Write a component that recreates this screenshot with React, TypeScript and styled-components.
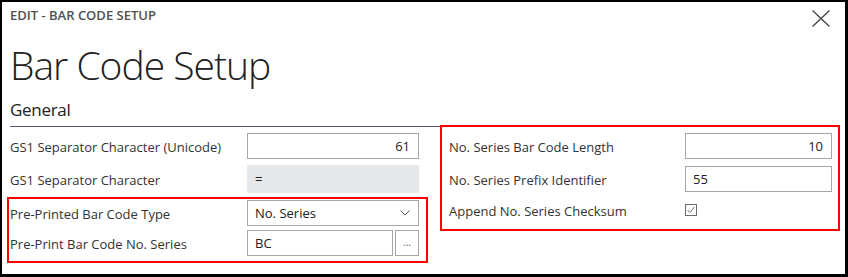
import React from "react"
import styled, { createGlobalStyle } from "styled-components"

const GlobalStyle = createGlobalStyle`
  html, body {
    margin: 0;
    padding: 0;
    background: #ffffff;
  }
  body {
    font-family: "Open Sans", "Noto Sans", sans-serif;
    color: #212121;
  }
`

const Frame = styled.div`
  box-sizing: border-box;
  width: 848px;
  height: 277px;
  border-style: solid;
  border-color: #000000;
  border-width: 2px 3px 3px 2px;
  padding: 5px 13px 0 8px;
  background: #ffffff;
  display: flex;
  flex-direction: column;
  overflow: hidden;
`

const Header = styled.div`
  height: 20px;
  display: flex;
  justify-content: space-between;
  align-items: flex-start;
`

const Caption = styled.div`
  font-size: 13px;
  line-height: 16px;
  font-weight: 600;
  color: #505050;
  text-transform: uppercase;
`

const CloseButton = styled.button`
  margin: 3px 2px 0 0;
  padding: 0;
  border: none;
  background: none;
  width: 18px;
  height: 17px;
  display: flex;
`

const Title = styled.h1`
  margin: 18px 0 0;
  font-size: 39px;
  line-height: 40px;
  font-weight: 300;
  color: #212121;
  letter-spacing: -1px;
`

const GroupCaption = styled.div`
  margin-top: 13px;
  padding-bottom: 4px;
  font-size: 17px;
  line-height: 24px;
  letter-spacing: -0.3px;
  color: #212121;
  border-bottom: 1px solid #505c6d;
`

const Columns = styled.div`
  margin-top: 3px;
  display: grid;
  grid-template-columns: 409px 383px;
  column-gap: 30px;
  align-items: start;
`

const Column = styled.div`
  display: flex;
  flex-direction: column;
`

const Mark = styled.div<{ $margin: string; $padding: string }>`
  display: flex;
  flex-direction: column;
  border: 2px solid #ff0000;
  margin: ${(p) => p.$margin};
  padding: ${(p) => p.$padding};
`

const Row = styled.div<{ $h: number; $label: number }>`
  height: ${(p) => p.$h}px;
  display: grid;
  grid-template-columns: ${(p) => p.$label}px 1fr;
  align-items: center;
`

const Label = styled.span`
  font-size: 13px;
  color: #333333;
  white-space: nowrap;
  padding-top: 2px;
`

const Field = styled.div<{ $align?: "left" | "right"; $readonly?: boolean }>`
  box-sizing: border-box;
  height: ${(p) => (p.$readonly ? 28 : 26)}px;
  padding: 0 8px 0 7px;
  display: flex;
  align-items: center;
  justify-content: ${(p) => (p.$align === "right" ? "flex-end" : "space-between")};
  border: ${(p) => (p.$readonly ? "none" : "1px solid #a6a6a6")};
  background: ${(p) => (p.$readonly ? "#e6e7e9" : "#ffffff")};
  font-size: 13px;
  color: #212121;
  ${(p) => (p.$readonly ? "padding-left: 8px;" : "")}
`

const LookupRow = styled.div`
  display: grid;
  grid-template-columns: 1fr 24px;
  column-gap: 2px;
`

const LookupButton = styled.div`
  box-sizing: border-box;
  height: 26px;
  border: 1px solid #a6a6a6;
  display: flex;
  align-items: flex-end;
  justify-content: center;
  padding-bottom: 8px;
  font-size: 10px;
  line-height: 10px;
  color: #4a5a70;
`

const CheckBox = styled.span`
  box-sizing: border-box;
  width: 12px;
  height: 12px;
  border: 1px solid #6b6b6b;
  display: flex;
  align-items: center;
  justify-content: center;
`

const Chevron = () => (
  <svg width="10" height="6" viewBox="0 0 10 6">
    <path d="M0.5 0.5 L5 5 L9.5 0.5" fill="none" stroke="#555" strokeWidth="1" />
  </svg>
)

const Check = () => (
  <svg width="10" height="10" viewBox="0 0 10 10">
    <path d="M1.5 5 L4 7.5 L8.5 2" fill="none" stroke="#666" strokeWidth="1" />
  </svg>
)

const App = () => {
  return (
    <>
      <GlobalStyle />
      <Frame>
        <Header>
          <Caption>Edit - Bar Code Setup</Caption>
          <CloseButton aria-label="Close">
            <svg width="18" height="17" viewBox="0 0 18 17">
              <path d="M0.5 0.5 L17.5 16.5 M17.5 0.5 L0.5 16.5" stroke="#444" strokeWidth="1.3" />
            </svg>
          </CloseButton>
        </Header>
        <Title>Bar Code Setup</Title>
        <GroupCaption>General</GroupCaption>
        <Columns>
          <Column>
            <Row $h={32} $label={237}>
              <Label>GS1 Separator Character (Unicode)</Label>
              <Field $align="right">61</Field>
            </Row>
            <Row $h={34} $label={237}>
              <Label>GS1 Separator Character</Label>
              <Field $readonly>=</Field>
            </Row>
            <Mark $margin="1px -9px 0 -3px" $padding="0 7px 2px 1px">
              <Row $h={28} $label={237}>
                <Label>Pre-Printed Bar Code Type</Label>
                <Field>
                  No. Series
                  <Chevron />
                </Field>
              </Row>
              <Row $h={32} $label={237}>
                <Label>Pre-Print Bar Code No. Series</Label>
                <LookupRow>
                  <Field>BC</Field>
                  <LookupButton>...</LookupButton>
                </LookupRow>
              </Row>
            </Mark>
          </Column>
          <Column>
            <Mark $margin="-5px -8px 0 -9px" $padding="3px 6px 5px 7px">
              <Row $h={32} $label={236}>
                <Label>No. Series Bar Code Length</Label>
                <Field $align="right">10</Field>
              </Row>
              <Row $h={34} $label={236}>
                <Label>No. Series Prefix Identifier</Label>
                <Field>55</Field>
              </Row>
              <Row $h={28} $label={236}>
                <Label>Append No. Series Checksum</Label>
                <CheckBox>
                  <Check />
                </CheckBox>
              </Row>
            </Mark>
          </Column>
        </Columns>
      </Frame>
    </>
  )
}

export default App
